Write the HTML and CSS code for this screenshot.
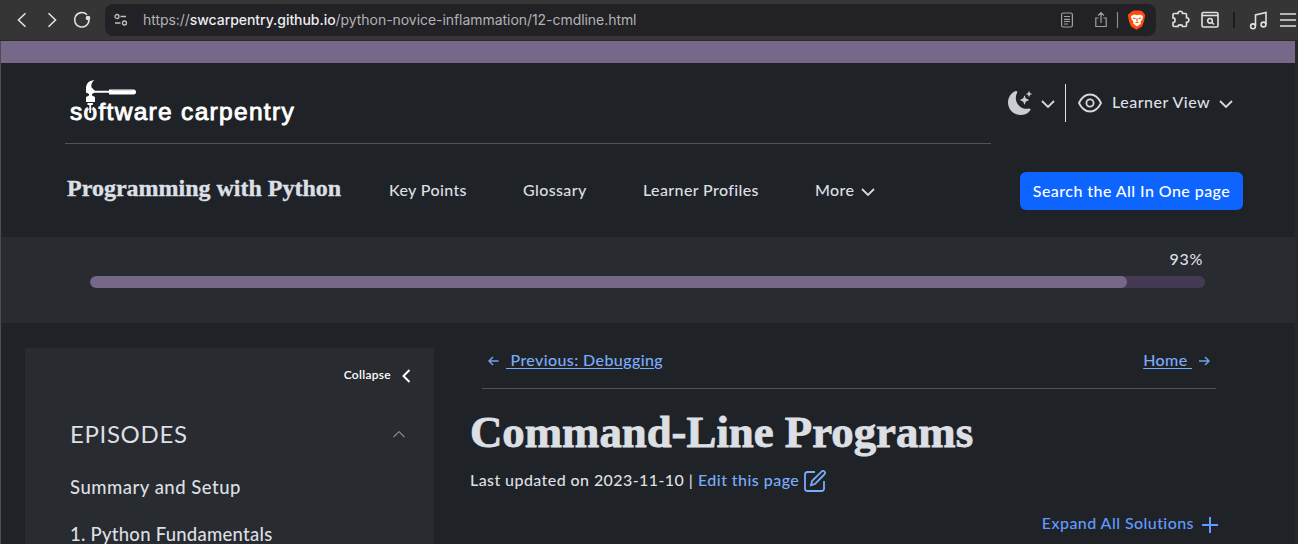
FILE: index.html
```html
<!DOCTYPE html>
<html lang="en">
<head>
<meta charset="utf-8">
<title>Programming with Python: Command-Line Programs</title>
<link rel="stylesheet" href="styles.css">
</head>
<body>
<div class="window">
  <div class="toolbar">
    <svg class="nav-icons" width="105" height="40" viewBox="0 0 105 40">
      <path d="M25.500 13.200 18.500 20l7 6.800M48.500 13.200l7 6.800-7 6.800"/>
      <path d="M87 14.800a7.200 7.200 0 1 0 2 5"/>
      <circle class="solid" cx="88" cy="18" r="2.300"/>
    </svg>
    <div class="address">
      <svg class="site-icon" width="14" height="14" viewBox="0 0 14 14"><circle cx="3" cy="3.500" r="2"/><path d="M6.500 3.500H12M1 10h5.500"/><circle cx="10.500" cy="10" r="2"/></svg>
      <div class="url">https://<b>swcarpentry.github.io</b>/python-novice-inflammation/12-cmdline.html</div>
      <svg class="addr-icons" width="96" height="32" viewBox="0 0 96 32">
        <rect x="1.600" y="9" width="10.800" height="14" rx="1.800"/>
        <path d="M4 12.500h6M4 15.300h6M4 17.500h6M4 20h4"/>
        <path d="M38.500 14h-2.700v8.500h10.400V14h-2.700M41 19V9M38 11.700 41 8.700l3 3"/>
        <path class="split" d="M57.500 8v16"/>
        <path class="shield" d="m72 8 2-.8h6l2 .8 2.500 3-1 6-2 5-5 3-5-3-2-5-1-6z"/>
        <path class="lion" d="m71 12 3-1.500 3 .700 3-.700 3 1.500-.500 3-2 3 .500 1.500-4 3-4-3 .500-1.500-2-3z"/>
        <path class="mane" d="m73 14 2.500.8M81 14l-2.500.8M77 14.500v3M75.500 18.500h3"/>
      </svg>
    </div>
    <svg class="tool-icons" width="142" height="40" viewBox="1156 0 142 40">
      <path d="M1173 14.500q0-1 1-1h4c-.5-3 5-3 4.500 0h3q1 0 1 1v3.200c3.200 0 3.200 4.600 0 4.600v3.200q0 1-1 1h-3c0-2.200-4.500-2.200-4.500 0h-4q-1 0-1-1v-3c2.800 0 2.800-4.600 0-4.600z"/>
      <rect x="1202" y="12.500" width="16" height="14.500" rx="1.500"/><path d="M1202 15.500h16"/><circle cx="1210" cy="20.800" r="2.300"/><path d="m1212 22.500 2 2"/>
      <path class="separator" d="M1234 12v16"/>
      <path d="M1255.500 26V15l10.500-2.500v12"/><circle cx="1253" cy="26.300" r="2.400"/><circle cx="1263.500" cy="24.500" r="2.400"/>
      <path class="menu" d="M1280 14h16M1280 20h16M1280 26h16"/>
    </svg>
  </div>

  <div class="page">
    <div class="stripe"></div>
    <header class="header">
      <div class="brand-row">
        <div class="brand">
          <div class="brand-text">software carpentry</div>
          <svg class="hammer" width="68" height="46" viewBox="0 0 68 46">
            <path class="gap" d="M20.200 23.500v6"/><path class="handle" d="M20.200 25v9M17.500 25h5.400"/>
            <path d="M24.500 1Q17 1.500 16 8v5.500l3 1.500v1.500l-3 1.500v5h9v-5l-3-1.500V15l2.500-1.300H39v1.800h24.500q2.500 0 2.500-2.500t-2.500-2.500H39v1.200H25L21.500 8.500Q20.500 4 24.500 1z"/>
            <path class="grain" d="M42 11h20"/>
          </svg>
        </div>
        <div class="view-tools">
          <svg class="moon" width="24" height="24" viewBox="0 0 16 16"><path d="M6 .278a.768.768 0 0 1 .08.858 7.208 7.208 0 0 0-.878 3.460c0 4.021 3.278 7.277 7.318 7.277q.792-.001 1.533-.160a.787.787 0 0 1 .810.316.733.733 0 0 1-.031.893A8.349 8.349 0 0 1 8.344 16C3.734 16 0 12.286 0 7.710 0 4.266 2.114 1.312 5.124.060A.752.752 0 0 1 6 .278"/><path d="M10.794 3.148a.217.217 0 0 1 .412 0l.387 1.162c.173.518.579.924 1.097 1.097l1.162.387a.217.217 0 0 1 0 .412l-1.162.387a1.730 1.730 0 0 0-1.097 1.097l-.387 1.162a.217.217 0 0 1-.412 0l-.387-1.162A1.730 1.730 0 0 0 9.310 6.593l-1.162-.387a.217.217 0 0 1 0-.412l1.162-.387a1.730 1.730 0 0 0 1.097-1.097zM13.863.099a.145.145 0 0 1 .274 0l.258.774c.115.346.386.617.732.732l.774.258a.145.145 0 0 1 0 .274l-.774.258a1.160 1.160 0 0 0-.732.732l-.258.774a.145.145 0 0 1-.274 0l-.258-.774a1.160 1.160 0 0 0-.732-.732l-.774-.258a.145.145 0 0 1 0-.274l.774-.258c.346-.115.617-.386.732-.732z"/></svg>
          <svg class="stroke theme-caret" width="14" height="8" viewBox="0 0 14 8"><path d="m1 1 6 6 6-6"/></svg>
          <div class="rule"></div>
          <svg class="eye" width="24" height="20" viewBox="0 0 24 20"><path d="M1 10Q5 1.500 12 1.500T23 10Q19 18.500 12 18.500T1 10z"/><circle cx="12" cy="10" r="3.600"/></svg>
          <div class="learner">Learner View</div>
          <svg class="stroke" width="14" height="8" viewBox="0 0 14 8"><path d="m1 1 6 6 6-6"/></svg>
        </div>
      </div>
      <nav class="nav">
        <div class="lesson">Programming with Python</div>
        <div class="link points">Key Points</div>
        <div class="link glossary">Glossary</div>
        <div class="link profiles">Learner Profiles</div>
        <div class="link more">More</div>
        <svg class="stroke" width="14" height="8" viewBox="0 0 14 8"><path d="m1 1 6 6 6-6"/></svg>
        <div class="search">Search the All In One page</div>
      </nav>
    </header>

    <section class="progress">
      <div class="percent">93%</div>
      <div class="track"><div class="fill" style="width:93%"></div></div>
    </section>

    <div class="body">
      <aside class="sidebar">
        <div class="collapse"><span>Collapse</span><svg width="9" height="14" viewBox="0 0 9 14"><path d="M7.500 1 1.500 7l6 6"/></svg></div>
        <div class="episodes"><span>EPISODES</span><svg width="12" height="7" viewBox="0 0 12 7"><path d="m.500 6.200 5.500-5.500 5.500 5.500"/></svg></div>
        <div class="episode setup">Summary and Setup</div>
        <div class="episode fundamentals">1. Python Fundamentals</div>
      </aside>
      <main class="content">
        <div class="pager">
          <svg class="arrow" width="11" height="10" viewBox="0 0 11 10"><path d="M10.500 5H1M5 1 1 5l4 4"/></svg>
          <a class="previous">&nbsp;Previous: Debugging</a>
          <a class="home">Home&nbsp;</a>
          <svg class="arrow" width="11" height="10" viewBox="0 0 11 10"><path d="M0 5h10M6 1l4 4-4 4"/></svg>
        </div>
        <h1>Command-Line Programs</h1>
        <div class="updated"><span class="date">Last updated on 2023-11-10 |</span><a class="edit">Edit this page</a><svg width="22" height="22" viewBox="0 0 22 22"><path d="M11 2H3.500Q1 2 1 4.500v14Q1 21 3.500 21h14q2.500 0 2.500-2.500V11M18 1.200q2-.8 2.800.8T20 4.800L11 14l-4 1.200L8 11z"/></svg></div>
        <div class="expand"><a>Expand All Solutions</a><svg width="16" height="16" viewBox="0 0 16 16"><path d="M8 0v16M0 8h16"/></svg></div>
      </main>
    </div>
  </div>
</div>
</body>
</html>
```
FILE: styles.css
```css
* { box-sizing: border-box; }
body { margin: 0; background: #1f2226; color: #dcdfe3; font: 500 16px/24px Lato, sans-serif; }
svg { display: block; flex: none; fill: none; }
div, span, a { white-space: nowrap; }
.window { width: 1298px; height: 544px; overflow: hidden; }
.toolbar { display: flex; height: 41px; background: #353536; border-bottom: 1px solid #28282a; }
.nav-icons, .tool-icons { stroke: #e0e0e1; stroke-width: 1.6; }
.nav-icons .solid { fill: #e0e0e1; stroke: none; }
.tool-icons .separator { stroke: #1d1d1f; stroke-width: 2; }
.tool-icons .menu { stroke-width: 1.7; }
.address { display: flex; align-items: center; width: 1052px; height: 32px; margin-top: 4px; border-radius: 8px; background: #222126; }
.site-icon { margin-left: 9px; stroke: #c0c0c3; stroke-width: 1.3; }
.url { flex: 1; margin-left: 15px; color: #b2b2b5; font: 400 14px/20px Inter, sans-serif; letter-spacing: -.05px; }
.url b { color: #ececee; font-weight: 500; }
.addr-icons { stroke: #a0a0a4; stroke-width: 1.2; }
.addr-icons .split { stroke: #8d8d91; }
.addr-icons .shield { fill: #ff4b0b; stroke: #ff4b0b; }
.addr-icons .lion { fill: #fff; stroke: none; }
.addr-icons .mane { stroke: #ff4b0b; }
.page { height: 503px; border-left: 1px solid #4b4d50; border-right: 3px solid #29292a; background: #1f2327; }
.stripe { height: 22px; background: #776788; }
.header { height: 174px; padding: 0 52px 0 64px; }
.brand-row { display: flex; justify-content: space-between; height: 81px; }
.brand { width: 926px; padding: 16px 0 0 5px; border-bottom: 1px solid #515457; position: relative; }
.hammer { position: absolute; left: 5px; top: 16px; fill: #fff; }
.hammer .gap { stroke: #1f2327; stroke-width: 5; }
.hammer .handle { stroke: #fff; stroke-width: 1.8; }
.hammer .grain { stroke: #a9abad; stroke-width: .8; }
.brand-text { margin-top: 17px; color: #fff; font: 400 24.5px/32px "Liberation Sans", sans-serif; letter-spacing: 1.3px; -webkit-text-stroke: .9px #fff; }
.view-tools { display: flex; align-items: center; width: 235px; height: 79px; }
.moon { fill: #c9ccd0; }
.stroke { stroke: #d4d7db; stroke-width: 1.8; margin-top: 2px; }
.theme-caret { margin-left: 9px; }
.rule { width: 1px; height: 38px; margin: 0 12px 0 10px; background: #dcdfe3; }
.eye { stroke: #d4d7db; stroke-width: 1.8; }
.learner { width: 107px; margin: 0 0 1px 10px; letter-spacing: .5px; }
.nav { display: flex; align-items: center; height: 93px; }
.lesson { width: 322px; padding-left: 2px; font: 700 24px/28px "Liberation Serif", serif; -webkit-text-stroke: .4px; margin-bottom: 6px; }
.link { letter-spacing: .38px; margin-bottom: 1px; }
.points { margin-left: 2px; width: 134px; }
.glossary { width: 120px; }
.profiles { width: 172px; }
.more { width: 46px; }
.search { width: 223px; height: 38px; margin-left: auto; border-radius: 6px; background: #0d64ff; color: #fff; line-height: 38px; text-align: center; letter-spacing: .44px; }
.progress { height: 86px; padding: 10px 90px 0 89px; background: #282b2f; }
.percent { padding-right: 2px; text-align: right; letter-spacing: .7px; }
.track { width: 1115px; height: 12px; margin-top: 5px; border-radius: 6px; background: #453a54; overflow: hidden; }
.fill { height: 12px; border-radius: 6px; background: #776788; }
.body { display: flex; padding-left: 24px; }
.sidebar { width: 409px; height: 196px; margin-top: 25px; padding: 17px 23px 0 45px; background: #282b2f; }
.collapse { display: flex; justify-content: flex-end; align-items: center; gap: 11px; height: 20px; color: #fff; font: 600 12px/20px Lato, sans-serif; letter-spacing: .3px; }
.collapse svg { margin-top: 2px; stroke: #fff; stroke-width: 2; }
.episodes { display: flex; align-items: center; justify-content: space-between; height: 32px; margin-top: 33px; padding-right: 6px; font: 400 24px/32px Lato, sans-serif; letter-spacing: .65px; }
.episodes svg { stroke: #8b8e92; stroke-width: 1.2; }
.episode { font-size: 18.5px; line-height: 24px; letter-spacing: .5px; }
.setup { margin-top: 25px; }
.fundamentals { margin-top: 23px; letter-spacing: .25px; }
.content { width: 746px; margin-left: 36px; }
.pager { display: flex; align-items: center; height: 66px; margin-left: 12px; width: 734px; padding: 8px 6px 0; border-bottom: 1px solid #515457; }
.pager a { text-decoration: underline; text-underline-offset: 2px; color: #7aacfb; letter-spacing: .4px; }
.arrow { stroke: #71a0e9; stroke-width: 1.5; margin-top: 2px; }
.previous { margin-left: 7px; }
.home { margin-left: auto; margin-right: 7px; }
h1 { margin: 18px 0 0; font: 700 44.8px/50px "Liberation Serif", serif; -webkit-text-stroke: .9px; }
.updated { display: flex; align-items: center; height: 26px; margin-top: 10px; }
.date { width: 228px; letter-spacing: .42px; }
.edit { width: 106px; color: #7aacfb; letter-spacing: .45px; }
.updated svg { stroke: #7aacfb; stroke-width: 1.8; margin-top: 2px; }
.expand { display: flex; align-items: center; justify-content: flex-end; gap: 8px; margin: 18px -2px 0 0; color: #629aff; letter-spacing: .43px; }
.expand svg { stroke: #629aff; stroke-width: 2; margin-top: 3px; }
```
